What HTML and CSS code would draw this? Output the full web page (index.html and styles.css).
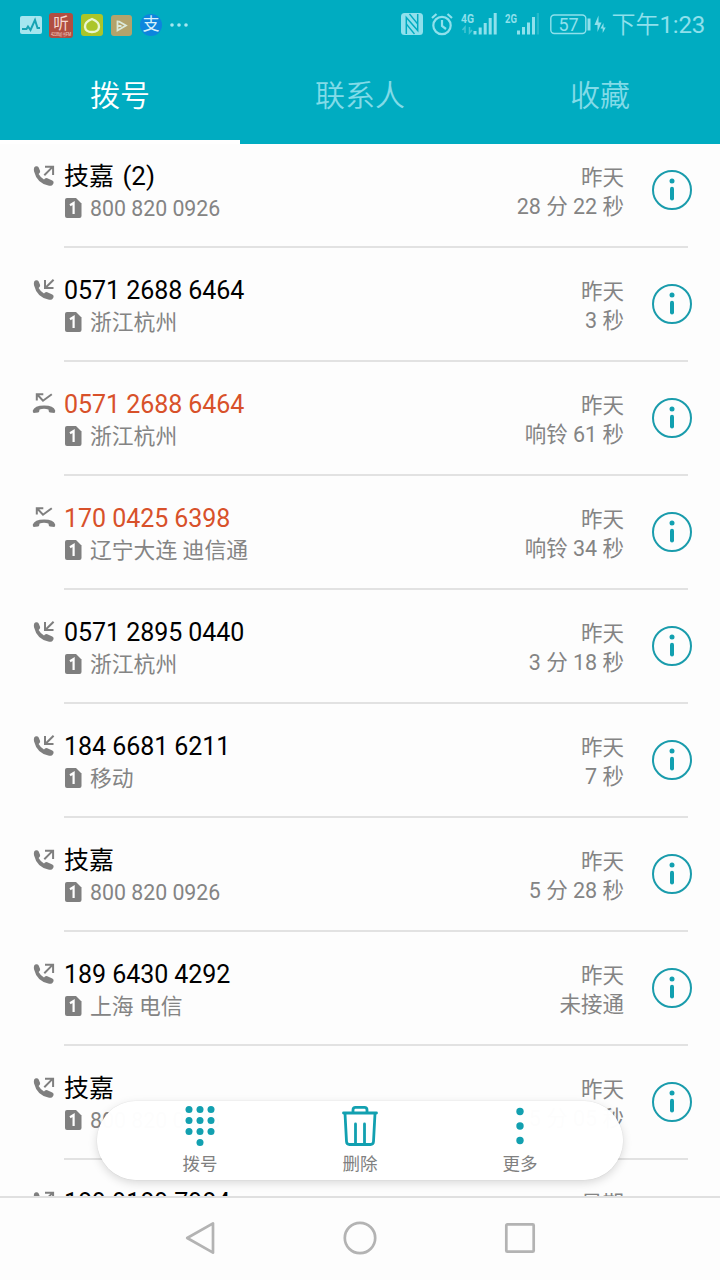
FILE: index.html
```html
<!DOCTYPE html>
<html lang="zh-CN">
<head>
<meta charset="utf-8">
<title>拨号</title>
<link rel="stylesheet" href="styles.css">
</head>
<body>
<svg class="defs" aria-hidden="true">
  <symbol id="handset" viewBox="0 0 24 24"><path d="M2.200 3.400Q3 2 5 2.200q1.300.2 1.800 1.600l1.300 3.300q.4 1.400-1 2.500l-.5.5q2 3.500 5.400 5.500l1-1q.9-1 2.300-.4l5 2.200q1.600.8 1.300 2.500-1.100 3.200-4.500 2.800Q5 19.600 2 7.200 1.600 5 2.200 3.400z" fill="#7f7f7f"/></symbol>
  <symbol id="out" viewBox="0 0 24 24"><use href="#handset"/><path d="M12.300 11.200 20.600 2.900M13 2.700h8.100v8.200" fill="none" stroke="#7f7f7f" stroke-width="2"/></symbol>
  <symbol id="in" viewBox="0 0 24 24"><use href="#handset"/><path d="M21.600 1.700 14 9.300M13 2v8h8.500" fill="none" stroke="#7f7f7f" stroke-width="2"/></symbol>
  <symbol id="missed" viewBox="0 0 24 24"><path d="M4.800 8.500V2.200h6.500M5 2.200l6 6.500L19.800 2.200" fill="none" stroke="#7f7f7f" stroke-width="2"/><path d="M.8 18.500Q2.500 13.500 12 13.400t11.200 5.100q.2 2.300-1 2.400l-4.200-.5q-1.400-.2-1.600-3-4.400-1.400-8.800 0-.2 2.800-1.600 3l-4.200.5Q.6 20.800.8 18.500z" fill="#7f7f7f"/></symbol>
  <symbol id="sim" viewBox="0 0 17 20"><path d="M2 0h9l5.500 5.500V18q0 2-2 2H2q-2 0-2-2V2Q0 0 2 0z" fill="#7f7f7f"/><path d="M5 7.300 8.600 5v11" fill="none" stroke="#fff" stroke-width="2.200"/></symbol>
  <symbol id="info" viewBox="0 0 40 40"><circle cx="20" cy="20" r="19" fill="none" stroke="#1a9cac" stroke-width="2"/><circle cx="20" cy="11" r="2.500" fill="#12a0b0"/><path d="M20 18.700v9.800" stroke="#12a0b0" stroke-width="4" stroke-linecap="round"/></symbol>
</svg>
<div class="screen">
  <header class="header">
    <div class="status">
      <div class="notices">
        <svg width="22" height="18" viewBox="0 0 22 18"><rect width="22" height="18" rx="2" fill="#a5e6ef"/><path d="M2 13h4.500l1.500-2.500 2.500 3.500L15 4l2.500 8H20" fill="none" stroke="#16a3b3" stroke-width="2"/></svg>
        <svg class="listen" width="24" height="25" viewBox="0 0 24 25"><rect width="24" height="25" rx="3" fill="#b04e40"/><text class="ear" x="12" y="15.500" text-anchor="middle">听</text><text class="fm" x="2" y="22.500" textLength="20" lengthAdjust="spacingAndGlyphs">4238听书FM</text></svg>
        <svg width="22" height="22" viewBox="0 0 22 22"><rect width="22" height="22" rx="3" fill="#abc529"/><path d="M11 5Q18.500 8 18 13 17.500 18 11 18T4 13Q3.500 8 11 5z" fill="none" stroke="#e9f6cf" stroke-width="2.400"/></svg>
        <svg width="21" height="21" viewBox="0 0 21 21"><rect width="21" height="21" rx="3" fill="#b3a36c"/><path d="M6.500 5.500v10L15 10.500 7.500 6.200M6.500 11h4" fill="none" stroke="#dceadb" stroke-width="1.800"/></svg>
        <span class="pay">支</span>
        <svg width="18" height="4" viewBox="0 0 18 4" fill="#a6e7f0"><circle cx="2" cy="2" r="1.800"/><circle cx="9" cy="2" r="1.800"/><circle cx="16" cy="2" r="1.800"/></svg>
      </div>
      <div class="system">
        <svg width="22" height="22" viewBox="0 0 22 22"><rect width="22" height="22" rx="3.500" fill="#8fe0ec"/><path d="M5.300 21V4.500L16.700 17.500V1" fill="none" stroke="#00acc1" stroke-width="1.500"/><path d="M8.500 1 16.700 11M5.300 11l8.200 10" fill="none" stroke="#00acc1" stroke-width="1.300"/></svg>
        <svg class="alarm" width="22" height="24" viewBox="0 0 22 24" fill="none" stroke="#8fe0ec" stroke-width="2.200"><circle cx="11" cy="13.500" r="8.700"/><path d="M11 8V14l4 3M1 6 5.500 2M16.500 2 21 6"/></svg>
        <svg class="sig4" width="36" height="24" viewBox="0 0 36 24"><text class="net" x="0" y="11" textLength="13" lengthAdjust="spacingAndGlyphs">4G</text><path d="M1.500 18 4 15v6M8.500 15v6l2.500-3" fill="none" stroke="#45c5d4" stroke-width="1.500"/><path d="M14 19v3.500M19.200 15.500v7M24.200 11v11.500M29.200 6v16.500M34.200 1v21.500" stroke="#8fe0ec" stroke-width="3"/></svg>
        <svg class="sig2" width="34" height="24" viewBox="0 0 34 24"><text class="net" x="0" y="11" textLength="12" lengthAdjust="spacingAndGlyphs">2G</text><path d="M13.500 18.500v4M18.500 15v7.500M23.500 10.500v12M28.500 5v17.500" stroke="#8fe0ec" stroke-width="3"/><path d="M33 1v21.500" stroke="#27b9ca" stroke-width="2.500"/></svg>
        <svg class="batt" width="56" height="22" viewBox="0 0 56 22"><rect x=".8" y="2" width="35" height="18.500" rx="3.500" fill="none" stroke="#8fe0ec" stroke-width="1.400"/><path d="M39 5.500v12" stroke="#8fe0ec" stroke-width="3"/><text class="level" x="18.500" y="17.500" text-anchor="middle">57</text><path d="M48.500 2.500 44.500 12h3v7l4-9.500h-3zM53.500 10 50.500 15.500h2.200V20l3-5.500h-2.200z" fill="#8fe0ec"/></svg>
        <span class="clock">下午<span class="time">1:23</span></span>
      </div>
    </div>
    <nav class="tabs"><span class="tab active">拨号</span><span class="tab">联系人</span><span class="tab">收藏</span></nav>
  </header>
  <main class="calls">
    <div class="call first"><svg class="kind"><use href="#out"/></svg><div class="body"><div class="who"><div class="name">技嘉<span class="count">(2)</span></div><div class="place num"><svg class="sim"><use href="#sim"/></svg>800 820 0926</div></div><div class="when"><div>昨天</div><div>28 分 22 秒</div></div><svg class="info"><use href="#info"/></svg></div></div>
    <div class="call"><svg class="kind"><use href="#in"/></svg><div class="body"><div class="who"><div class="name">0571 2688 6464</div><div class="place"><svg class="sim"><use href="#sim"/></svg>浙江杭州</div></div><div class="when"><div>昨天</div><div>3 秒</div></div><svg class="info"><use href="#info"/></svg></div></div>
    <div class="call"><svg class="kind"><use href="#missed"/></svg><div class="body"><div class="who"><div class="name red">0571 2688 6464</div><div class="place"><svg class="sim"><use href="#sim"/></svg>浙江杭州</div></div><div class="when"><div>昨天</div><div>响铃 61 秒</div></div><svg class="info"><use href="#info"/></svg></div></div>
    <div class="call"><svg class="kind"><use href="#missed"/></svg><div class="body"><div class="who"><div class="name red">170 0425 6398</div><div class="place"><svg class="sim"><use href="#sim"/></svg>辽宁大连 迪信通</div></div><div class="when"><div>昨天</div><div>响铃 34 秒</div></div><svg class="info"><use href="#info"/></svg></div></div>
    <div class="call"><svg class="kind"><use href="#in"/></svg><div class="body"><div class="who"><div class="name">0571 2895 0440</div><div class="place"><svg class="sim"><use href="#sim"/></svg>浙江杭州</div></div><div class="when"><div>昨天</div><div>3 分 18 秒</div></div><svg class="info"><use href="#info"/></svg></div></div>
    <div class="call"><svg class="kind"><use href="#in"/></svg><div class="body"><div class="who"><div class="name">184 6681 6211</div><div class="place"><svg class="sim"><use href="#sim"/></svg>移动</div></div><div class="when"><div>昨天</div><div>7 秒</div></div><svg class="info"><use href="#info"/></svg></div></div>
    <div class="call"><svg class="kind"><use href="#out"/></svg><div class="body"><div class="who"><div class="name">技嘉</div><div class="place num"><svg class="sim"><use href="#sim"/></svg>800 820 0926</div></div><div class="when"><div>昨天</div><div>5 分 28 秒</div></div><svg class="info"><use href="#info"/></svg></div></div>
    <div class="call"><svg class="kind"><use href="#out"/></svg><div class="body"><div class="who"><div class="name">189 6430 4292</div><div class="place"><svg class="sim"><use href="#sim"/></svg>上海 电信</div></div><div class="when"><div>昨天</div><div>未接通</div></div><svg class="info"><use href="#info"/></svg></div></div>
    <div class="call"><svg class="kind"><use href="#out"/></svg><div class="body"><div class="who"><div class="name">技嘉</div><div class="place num"><svg class="sim"><use href="#sim"/></svg>800 820 0926</div></div><div class="when"><div>昨天</div><div>5 分 05 秒</div></div><svg class="info"><use href="#info"/></svg></div></div>
    <div class="call last"><svg class="kind"><use href="#out"/></svg><div class="body"><div class="who"><div class="name">189 9189 7984</div><div class="place"></div></div><div class="when"><div>星期</div><div></div></div></div></div>
    <div class="actions">
      <div class="action"><svg width="40" height="40" viewBox="0 0 40 40" fill="#12a0b0"><circle cx="9" cy="3.500" r="3.500"/><circle cx="20" cy="3.500" r="3.500"/><circle cx="31" cy="3.500" r="3.500"/><circle cx="9" cy="14.500" r="3.500"/><circle cx="20" cy="14.500" r="3.500"/><circle cx="31" cy="14.500" r="3.500"/><circle cx="9" cy="25.500" r="3.500"/><circle cx="20" cy="25.500" r="3.500"/><circle cx="31" cy="25.500" r="3.500"/><circle cx="20" cy="36.500" r="3.500"/></svg><span>拨号</span></div>
      <div class="action"><svg width="40" height="40" viewBox="0 0 40 40" fill="none" stroke="#12a0b0" stroke-width="2.800" stroke-linecap="round"><path d="M3.500 7h33M13 6.500V4q0-2.600 2.500-2.600h9Q27 1.400 27 4v2.500M5 7.500l1.500 28q.2 3 3 3h21q2.800 0 3-3L35 7.500M15.500 18v19.500M24.500 18v19.500"/></svg><span>删除</span></div>
      <div class="action"><svg width="40" height="40" viewBox="0 0 40 40" fill="#12a0b0"><circle cx="20" cy="5.500" r="3.700"/><circle cx="20" cy="20" r="3.700"/><circle cx="20" cy="34.500" r="3.700"/></svg><span>更多</span></div>
    </div>
  </main>
  <footer class="navbar">
    <svg width="32" height="34" viewBox="0 0 32 34"><path d="M29 2.300v29.400L3.200 17z"/></svg>
    <svg width="34" height="34" viewBox="0 0 34 34"><circle cx="17" cy="17" r="15.200"/></svg>
    <svg width="32" height="34" viewBox="0 0 32 34"><rect x="2.300" y="3.300" width="27.400" height="27.400" rx="1"/></svg>
  </footer>
</div>
</body>
</html>
```
FILE: styles.css
```css
* { box-sizing: border-box; }
body { margin: 0; font-family: Roboto, "Noto Sans CJK SC", sans-serif; background: #fdfdfd; }
svg { display: block; flex: none; }
.defs { position: absolute; width: 0; height: 0; }
.screen { width: 720px; height: 1280px; display: flex; flex-direction: column; overflow: hidden; }
.header { height: 144px; flex: none; background: #00acc1; }
.status { height: 48px; padding: 0 15px 0 20px; display: flex; justify-content: space-between; align-items: center; color: #8fe0ec; }
.notices { display: flex; align-items: center; gap: 8px; padding-top: 2px; }
.listen { margin: 0 -1px 0 -1px; }
.listen + svg { margin-left: 1px; }
.ear { font-size: 15.500px; fill: #f5d8d0; }
.fm { font-size: 4.500px; fill: #f5d8d0; }
.pay { width: 22px; height: 22px; border-radius: 50%; background: #0d85dd; color: #d8f1fa; font-size: 17px; line-height: 21px; text-align: center; }
.system { display: flex; align-items: center; }
.alarm, .sig4, .sig2 { margin-left: 8px; }
.batt { margin-left: 11px; }
.net { font-size: 13px; font-weight: 700; fill: #8fe0ec; }
.level { font-size: 18px; fill: #8fe0ec; }
.clock { margin-left: 6px; padding-top: 2px; font-size: 24px; line-height: 46px; font-weight: 350; white-space: nowrap; }
.time { font-weight: 400; letter-spacing: -.2px; }
.tabs { height: 96px; display: flex; }
.tab { width: 240px; height: 96px; text-align: center; font-size: 30px; font-weight: 350; line-height: 96px; color: #82dbe8; }
.tab.active { color: #fff; border-bottom: 4px solid #fff; }
.calls { position: relative; height: 1052px; flex: none; overflow: hidden; }
.call { height: 114px; padding-left: 32px; display: flex; align-items: flex-end; }
.call.first { height: 104px; }
.kind { width: 24px; height: 24px; margin-bottom: 60px; }
.body { width: 624px; height: 100%; margin-left: 8px; border-bottom: 2px solid #e2e2e2; display: flex; align-items: flex-end; }
.who { flex: 1; padding-bottom: 21px; }
.name { height: 32px; font-size: 25px; letter-spacing: -.05px; line-height: 32px; color: #000; white-space: nowrap; }
.name.red { color: #d8512a; }
.count { margin-left: 8.500px; font-size: 26px; letter-spacing: 0; line-height: 30px; }
.place { height: 32px; display: flex; align-items: center; font-size: 21.800px; line-height: 32px; color: #848484; white-space: pre; }
.place.num { font-size: 21.300px; }
.sim { width: 17px; height: 20px; margin: -2px 8px 0 1px; }
.when { padding-bottom: 25px; text-align: right; font-size: 21.500px; line-height: 30px; color: #848484; white-space: nowrap; }
.when div { height: 29px; }
.info { width: 40px; height: 40px; margin: 0 -4px 36px 28px; }
.last .when { margin-right: 64px; }
.actions { position: absolute; left: 97px; top: 957px; width: 526px; height: 79px; border-radius: 40px; background: rgba(255, 255, 255, .98); box-shadow: 0 3px 10px rgba(0, 0, 0, .15), 0 0 1px rgba(0, 0, 0, .2); display: flex; justify-content: center; }
.action { width: 160px; display: flex; flex-direction: column; align-items: center; padding-top: 5px; font-size: 17.500px; line-height: 26px; color: #808080; }
.action span { padding-top: 5px; }
.navbar { flex: 1; padding-bottom: 2px; border-top: 2px solid #e0e0e0; display: flex; justify-content: center; align-items: center; gap: 127px; }
.navbar svg { fill: none; stroke: #b3b3b3; stroke-width: 2.700; stroke-linejoin: round; }
```
